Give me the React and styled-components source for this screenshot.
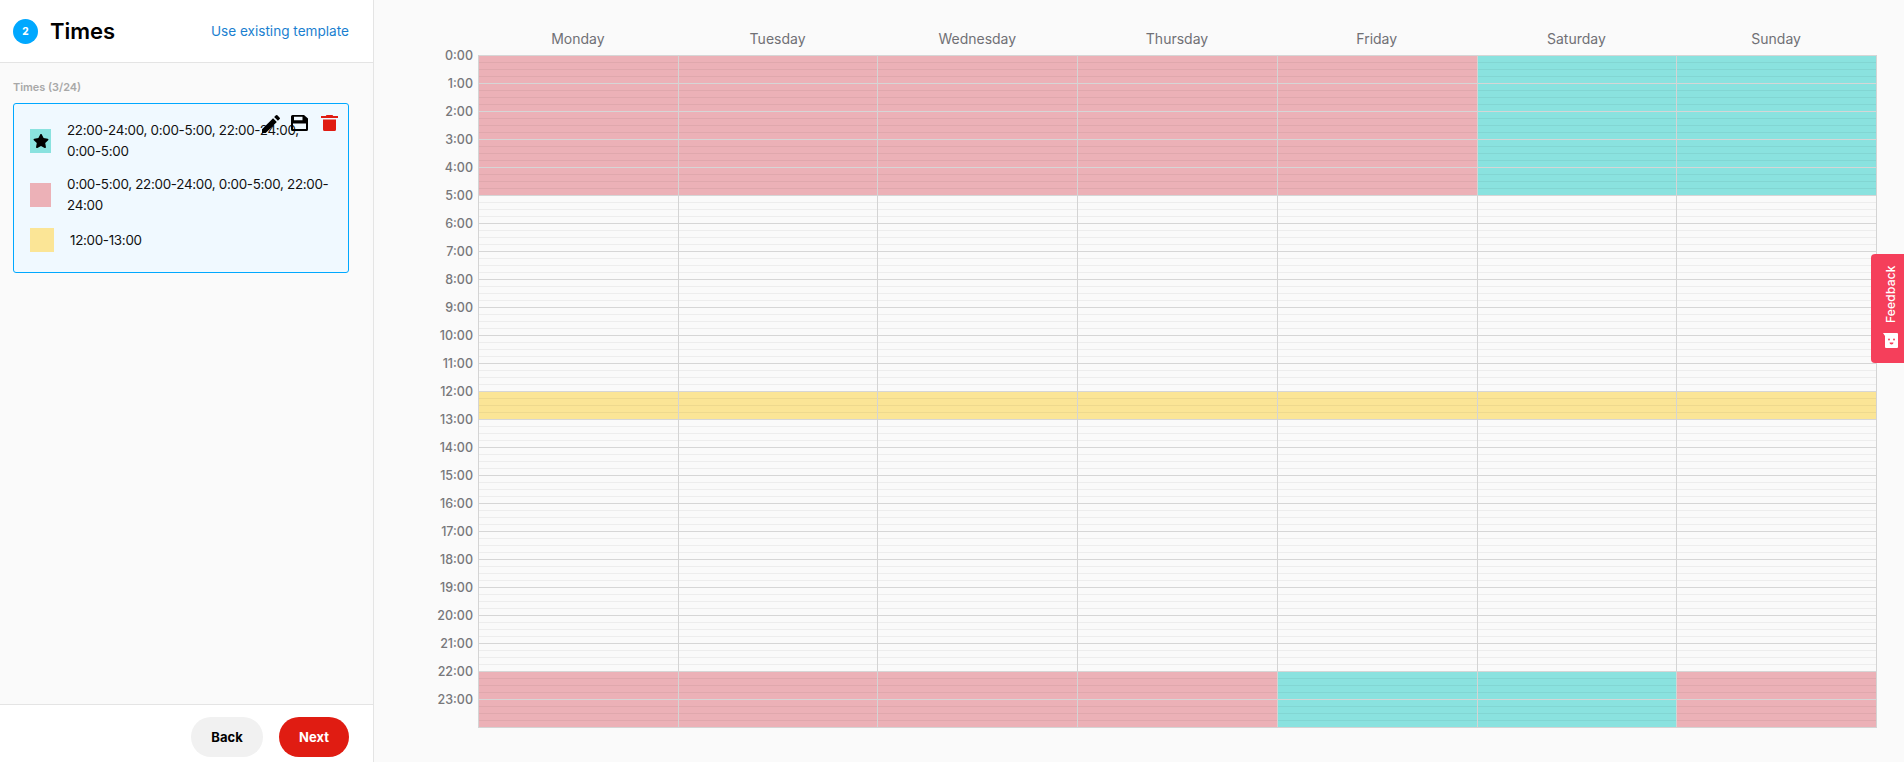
import React from "react";
import styled, { createGlobalStyle } from "styled-components";
import { MdEdit } from "react-icons/md";
import { FaStar } from "react-icons/fa";

const FONT = `Inter, "Noto Sans", "Liberation Sans", sans-serif`;

const GlobalStyle = createGlobalStyle`
  html, body {
    margin: 0;
    height: 762px;
    overflow: hidden;
    background: #fafafa;
    font-family: ${FONT};
  }
`;

const Page = styled.div`
  display: flex;
  height: 762px;
  position: relative;
`;

const Sidebar = styled.aside`
  width: 374px;
  flex: none;
  box-sizing: border-box;
  border-right: 1px solid #e4e4e4;
  display: flex;
  flex-direction: column;
`;

const SideHeader = styled.header`
  height: 63px;
  box-sizing: border-box;
  flex: none;
  background: #fff;
  border-bottom: 1px solid #e4e4e4;
  padding: 0 24px 0 13px;
  display: flex;
  align-items: center;
`;

const StepBadge = styled.span`
  width: 25px;
  height: 25px;
  border-radius: 50%;
  background: #00a8ff;
  color: #fff;
  font-size: 10px;
  font-weight: 800;
  display: flex;
  align-items: center;
  justify-content: center;
`;

const Title = styled.h1`
  margin: 0 0 0 12px;
  font-size: 22px;
  font-weight: 600;
  color: #000;
  flex: 1;
`;

const TemplateLink = styled.a`
  font-size: 13.6px;
  font-weight: 400;
  color: #1a7fd0;
`;

const SideBody = styled.div`
  flex: 1;
  padding: 15px 24px 0 13px;
`;

const SectionLabel = styled.div`
  font-size: 10.9px;
  line-height: 18px;
  font-weight: 600;
  color: #a8a8a8;
  margin-bottom: 7px;
`;

const Card = styled.div`
  position: relative;
  height: 170px;
  box-sizing: border-box;
  background: #f0f9ff;
  border: 1px solid #00a8ff;
  border-radius: 3px;
  padding: 16px 16px 0;
  display: flex;
  flex-direction: column;
  gap: 12px;
`;

const Actions = styled.div`
  position: absolute;
  top: 8px;
  right: 10px;
  display: flex;
  align-items: flex-start;
  font-size: 24px;
  color: #000;
`;

const FloppySvg = styled.svg`
  margin: 3px 13px 0 8px;
`;

const TrashSvg = styled.svg`
  margin-top: 3px;
`;

const ScheduleRow = styled.div`
  display: flex;
  align-items: center;
  min-height: ${(p) => (p.$single ? "24px" : "42px")};
`;

const Swatch = styled.span`
  width: ${(p) => (p.$wide ? "24px" : "21px")};
  height: 24px;
  flex: none;
  background: ${(p) => p.$color};
  margin-right: 16px;
  display: flex;
  align-items: center;
  justify-content: center;
  font-size: 16px;
  color: #000;
`;

const ScheduleText = styled.span`
  font-size: 13.4px;
  line-height: 21px;
  letter-spacing: -0.3px;
  color: #111;
`;

const SideFooter = styled.footer`
  height: 58px;
  box-sizing: border-box;
  flex: none;
  background: #fff;
  border-top: 1px solid #e4e4e4;
  padding: 12px 24px 0 0;
  display: flex;
  justify-content: flex-end;
  align-items: flex-start;
  gap: 16px;
`;

const PillButton = styled.button`
  width: ${(p) => (p.$primary ? "70px" : "72px")};
  height: 40px;
  border: 0;
  border-radius: 20px;
  font-family: ${FONT};
  font-size: 13px;
  font-weight: 700;
  background: ${(p) => (p.$primary ? "#e01c12" : "#f1f1f1")};
  color: ${(p) => (p.$primary ? "#fff" : "#000")};
`;

const Main = styled.main`
  flex: 1;
  padding: 28px 27px 0 0;
  display: flex;
  flex-direction: column;
`;

const DayHeader = styled.div`
  margin-left: 104px;
  padding-right: 1px;
  display: grid;
  grid-template-columns: repeat(7, 1fr);
  height: 27px;
`;

const DayName = styled.div`
  text-align: center;
  font-size: 14px;
  line-height: 22px;
  color: #707075;
`;

const Body = styled.div`
  display: flex;
`;

const TimeColumn = styled.div`
  width: 99px;
  margin: -13px 5px 0 0;
  flex: none;
`;

const TimeLabel = styled.div`
  height: 28px;
  line-height: 28px;
  text-align: right;
  font-size: 12.5px;
  font-weight: 500;
  color: #77777a;
`;

const Grid = styled.div`
  flex: 1;
  display: grid;
  grid-template-columns: repeat(7, 1fr);
  border-right: 1px solid #d4d4d4;
  border-bottom: 1px solid #d4d4d4;
  height: 673px;
  box-sizing: border-box;
`;

const DayColumn = styled.div`
  border-left: 1px solid #d4d4d4;
`;

const Slot = styled.div`
  height: 7px;
  box-sizing: border-box;
  background: ${(p) => p.$color || "transparent"};
  border-top: 1px solid ${(p) => (p.$hour ? "#d6d6d6" : "rgba(0, 0, 0, 0.05)")};
`;

const FeedbackTab = styled.div`
  position: absolute;
  right: 0;
  top: 254px;
  width: 33px;
  height: 109px;
  background: #f53f5b;
  border-radius: 4px 0 0 4px;
  display: flex;
  flex-direction: column;
  align-items: center;
  padding: 11px 0 0 5px;
  box-sizing: border-box;
  gap: 10px;
`;

const FeedbackText = styled.span`
  writing-mode: vertical-rl;
  transform: rotate(180deg);
  color: #fff;
  font-size: 12px;
  font-weight: 500;
  letter-spacing: 0.2px;
  height: 58px;
  text-align: left;
`;

const TEAL = "#8ae2df";
const PINK = "#ecb1b7";
const YELLOW = "#fbe596";

const DAYS = ["Monday", "Tuesday", "Wednesday", "Thursday", "Friday", "Saturday", "Sunday"];
const HOURS = Array.from({ length: 24 }, (_, i) => i);
const QUARTERS = Array.from({ length: 96 }, (_, i) => i);

function slotColor(day, hour) {
  if (hour < 5) return day >= 5 ? TEAL : PINK;
  if (hour === 12) return YELLOW;
  if (hour >= 22) return day === 4 || day === 5 ? TEAL : PINK;
  return null;
}

const FloppyIcon = () => (
  <FloppySvg width="17" height="16" viewBox="0 0 17 16">
    <path
      fillRule="evenodd"
      d="M1.5 0H13l4 3.5v11a1.5 1.5 0 0 1-1.5 1.5h-14A1.5 1.5 0 0 1 0 14.5v-13A1.5 1.5 0 0 1 1.5 0zM3 1.7v3.6h8.5V1.7zM2 8.5v5.6h13V8.5z"
      fill="#000"
    />
  </FloppySvg>
);

const TrashIcon = () => (
  <TrashSvg width="17" height="16" viewBox="0 0 17 16">
    <path
      d="M5.5 0h6l.7 1H17v2H0V1h4.8zM2 4.5h13V14.5a1.5 1.5 0 0 1-1.5 1.5h-10A1.5 1.5 0 0 1 2 14.5z"
      fill="#e01c12"
    />
  </TrashSvg>
);

const FeedbackFace = () => (
  <svg width="15" height="15" viewBox="0 0 15 15">
    <path d="M0 0h14a1 1 0 0 1 1 1v13a1 1 0 0 1-1 1H3a1 1 0 0 1-1-1V3z" fill="#fff" />
    <circle cx="6" cy="6.5" r="1" fill="#f53f5b" />
    <circle cx="11" cy="6.5" r="1" fill="#f53f5b" />
    <path d="M6.5 9.5h4a2 2 0 0 1-4 0z" fill="#f53f5b" />
  </svg>
);

export default function App() {
  return (
    <Page>
      <GlobalStyle />
      <Sidebar>
        <SideHeader>
          <StepBadge>2</StepBadge>
          <Title>Times</Title>
          <TemplateLink>Use existing template</TemplateLink>
        </SideHeader>
        <SideBody>
          <SectionLabel>Times (3/24)</SectionLabel>
          <Card>
            <Actions>
              <MdEdit />
              <FloppyIcon />
              <TrashIcon />
            </Actions>
            <ScheduleRow>
              <Swatch $color={TEAL}>
                <FaStar />
              </Swatch>
              <ScheduleText>22:00-24:00, 0:00-5:00, 22:00-24:00, 0:00-5:00</ScheduleText>
            </ScheduleRow>
            <ScheduleRow>
              <Swatch $color={PINK} />
              <ScheduleText>
                0:00-5:00, 22:00-24:00, 0:00-5:00, 22:00-
                <wbr />
                24:00
              </ScheduleText>
            </ScheduleRow>
            <ScheduleRow $single>
              <Swatch $color={YELLOW} $wide />
              <ScheduleText>12:00-13:00</ScheduleText>
            </ScheduleRow>
          </Card>
        </SideBody>
        <SideFooter>
          <PillButton>Back</PillButton>
          <PillButton $primary>Next</PillButton>
        </SideFooter>
      </Sidebar>
      <Main>
        <DayHeader>
          {DAYS.map((d) => (
            <DayName key={d}>{d}</DayName>
          ))}
        </DayHeader>
        <Body>
          <TimeColumn>
            {HOURS.map((h) => (
              <TimeLabel key={h}>{h}:00</TimeLabel>
            ))}
          </TimeColumn>
          <Grid>
            {DAYS.map((d, day) => (
              <DayColumn key={d}>
                {QUARTERS.map((q) => (
                  <Slot key={q} $hour={q % 4 === 0} $color={slotColor(day, Math.floor(q / 4))} />
                ))}
              </DayColumn>
            ))}
          </Grid>
        </Body>
      </Main>
      <FeedbackTab>
        <FeedbackText>Feedback</FeedbackText>
        <FeedbackFace />
      </FeedbackTab>
    </Page>
  );
}
